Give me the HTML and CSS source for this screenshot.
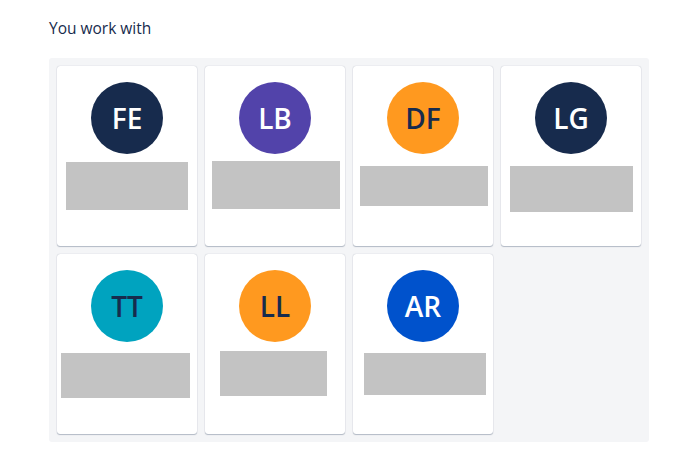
FILE: index.html
```html
<!DOCTYPE html>
<html>
<head>
<meta charset="utf-8">
<link rel="stylesheet" href="styles.css">
</head>
<body>
<main class="section">
  <h2 class="title">You work with</h2>
  <div class="panel">
    <div class="card">
      <div class="avatar navy">FE</div>
      <div class="name n1"></div>
    </div>
    <div class="card">
      <div class="avatar purple">LB</div>
      <div class="name n2"></div>
    </div>
    <div class="card">
      <div class="avatar orange">DF</div>
      <div class="name n3"></div>
    </div>
    <div class="card">
      <div class="avatar navy">LG</div>
      <div class="name n4"></div>
    </div>
    <div class="card">
      <div class="avatar teal">TT</div>
      <div class="name n5"></div>
    </div>
    <div class="card">
      <div class="avatar orange">LL</div>
      <div class="name n6"></div>
    </div>
    <div class="card">
      <div class="avatar blue">AR</div>
      <div class="name n7"></div>
    </div>
  </div>
</main>
</body>
</html>
```

FILE: styles.css
```css
html, body {
  margin: 0;
  padding: 0;
  background: #ffffff;
}

body {
  font-family: "Open Sans", "Noto Sans", sans-serif;
  color: #172b4d;
}

.section {
  padding: 18px 47px 0 49px;
}

.title {
  margin: 0 0 20px 0;
  font-size: 15.5px;
  line-height: 20px;
  font-weight: 500;
  color: #172b4d;
}

.panel {
  width: 584px;
  padding: 8px;
  background: #f4f5f7;
  border-radius: 3px;
  display: grid;
  grid-template-columns: repeat(4, 140px);
  grid-auto-rows: 180px;
  gap: 8px;
}

.card {
  background: #ffffff;
  border-radius: 3px;
  box-shadow: 0 1px 1px rgba(9, 30, 66, 0.25), 0 0 1px rgba(9, 30, 66, 0.31);
  display: flex;
  flex-direction: column;
  align-items: flex-start;
}

.avatar {
  width: 72px;
  height: 72px;
  margin: 16px auto 0 auto;
  border-radius: 50%;
  display: flex;
  align-items: center;
  justify-content: center;
  font-size: 28px;
  font-weight: 600;
  color: #ffffff;
  letter-spacing: 0;
}

.navy { background: #172b4d; }
.purple { background: #5243aa; }
.orange { background: #ff991f; color: #172b4d; }
.teal { background: #00a3bf; color: #172b4d; }
.blue { background: #0052cc; }

.name {
  background: #c3c3c3;
}

.n1 { width: 122px; height: 48px; margin: 8px 0 0 9px; }
.n2 { width: 128px; height: 48px; margin: 7px 0 0 7px; }
.n3 { width: 128px; height: 40px; margin: 12px 0 0 7px; }
.n4 { width: 123px; height: 46px; margin: 12px 0 0 9px; }
.n5 { width: 129px; height: 45px; margin: 11px 0 0 4px; }
.n6 { width: 107px; height: 45px; margin: 9px 0 0 15px; }
.n7 { width: 122px; height: 42px; margin: 11px 0 0 11px; }
```
